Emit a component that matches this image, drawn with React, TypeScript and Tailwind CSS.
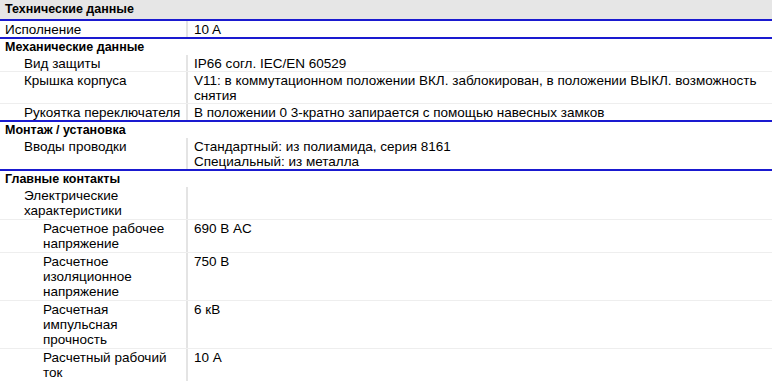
import React from 'react';

type Row = {
  label: string;
  value?: string[];
  indent?: 0 | 1 | 2;
  last?: boolean;
};

type Section = {
  title: string;
  rows: Row[];
  loose?: boolean;
};

const sections: Section[] = [
  {
    title: 'Механические данные',
    rows: [
      { label: 'Вид защиты', value: ['IP66 согл. IEC/EN 60529'], indent: 1 },
      {
        label: 'Крышка корпуса',
        value: [
          'V11: в коммутационном положении ВКЛ. заблокирован, в положении ВЫКЛ. возможность снятия',
        ],
        indent: 1,
      },
      {
        label: 'Рукоятка переключателя',
        value: ['В положении 0 3-кратно запирается с помощью навесных замков'],
        indent: 1,
        last: true,
      },
    ],
  },
  {
    title: 'Монтаж / установка',
    rows: [
      {
        label: 'Вводы проводки',
        value: ['Стандартный: из полиамида, серия 8161', 'Специальный: из металла'],
        indent: 1,
        last: true,
      },
    ],
  },
  {
    title: 'Главные контакты',
    loose: true,
    rows: [
      { label: 'Электрические характеристики', indent: 1 },
      { label: 'Расчетное рабочее напряжение', value: ['690 В AC'], indent: 2 },
      { label: 'Расчетное изоляционное напряжение', value: ['750 В'], indent: 2 },
      { label: 'Расчетная импульсная прочность', value: ['6 кВ'], indent: 2 },
      { label: 'Расчетный рабочий ток', value: ['10 А'], indent: 2 },
    ],
  },
];

function DataRow({ row, loose }: { row: Row; loose?: boolean }) {
  const pad =
    row.indent === 2
      ? 'pl-[43px] pr-2'
      : row.indent === 1
        ? 'pl-[24px] pr-0'
        : 'pl-[5px] pr-0';
  const py = loose ? 'pt-px pb-px' : 'pt-px';
  return (
    <div
      className={
        'grid grid-cols-[186px_2px_1fr] ' +
        (row.last ? 'border-b-2 border-[#1a1ad0]' : 'border-b border-[#eeeeee]')
      }
    >
      <div className={py + ' ' + pad}>{row.label}</div>
      <div className="bg-[#e4e4e4]" />
      <div className={py + ' pl-[6px] pr-3'}>
        {row.value?.map((v) => (
          <div key={v}>{v}</div>
        ))}
      </div>
    </div>
  );
}

export default function App() {
  return (
    <div className="w-[772px] h-[381px] overflow-hidden bg-white text-[13.5px] leading-[15px] text-black font-['Liberation_Sans',Arial,sans-serif]">
      {/* Заголовок */}
      <div className="bg-[#e6e6e6] border-b-2 border-[#1a1ad0] pl-[5px] pt-[2px] pb-[2px] text-[12.5px] font-bold">
        Технические данные
      </div>
      <DataRow row={{ label: 'Исполнение', value: ['10 A'], last: true }} />

      {sections.map((s) => (
        <div key={s.title}>
          <div className="pl-[5px] pt-px text-[12.5px] font-bold">{s.title}</div>
          {s.rows.map((r) => (
            <DataRow key={r.label} row={r} loose={s.loose} />
          ))}
        </div>
      ))}
    </div>
  );
}
